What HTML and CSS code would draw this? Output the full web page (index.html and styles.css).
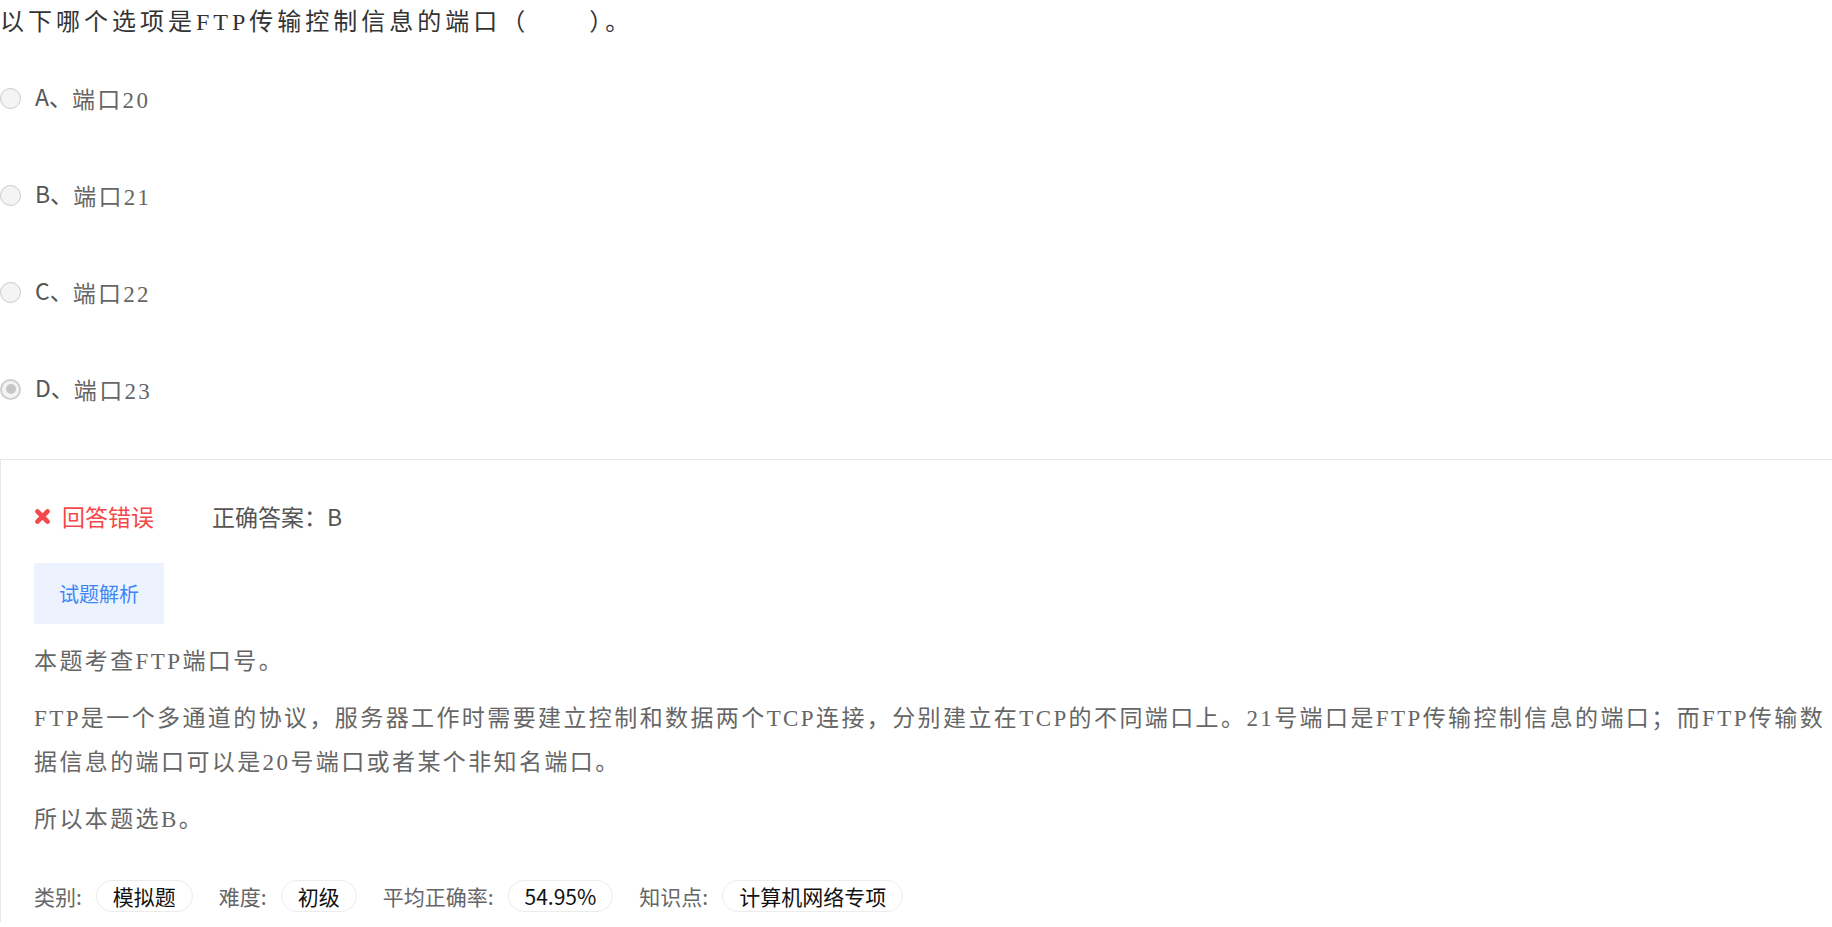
FILE: index.html
```html
<!DOCTYPE html>
<html lang="zh-CN">
<head>
<meta charset="utf-8">
<title>试题</title>
<link rel="stylesheet" href="styles.css">
</head>
<body>
<div class="page">
  <div class="question">以下哪个选项是FTP传输控制信息的端口（&nbsp;&nbsp;&nbsp;&nbsp;&nbsp;&nbsp;）。</div>
  <ul class="options">
    <li class="option"><span class="radio"></span><span class="opt-label"><span class="opt-key">A、</span><span class="opt-text">端口20</span></span></li>
    <li class="option"><span class="radio"></span><span class="opt-label"><span class="opt-key">B、</span><span class="opt-text">端口21</span></span></li>
    <li class="option"><span class="radio"></span><span class="opt-label"><span class="opt-key">C、</span><span class="opt-text">端口22</span></span></li>
    <li class="option"><span class="radio checked"></span><span class="opt-label"><span class="opt-key">D、</span><span class="opt-text">端口23</span></span></li>
  </ul>
  <div class="analysis">
    <div class="result">
      <span class="wrong"><svg class="wrong-icon" viewBox="0 0 16 16" aria-hidden="true"><path d="M3.2 3.2 L12.8 12.8 M12.8 3.2 L3.2 12.8" stroke="#f5484a" stroke-width="4.4" stroke-linecap="round" fill="none"/></svg>回答错误</span>
      <span class="answer">正确答案：B</span>
    </div>
    <div class="tabs"><span class="tab">试题解析</span></div>
    <div class="explain">
      <p>本题考查FTP端口号。</p>
      <p>FTP是一个多通道的协议，服务器工作时需要建立控制和数据两个TCP连接，分别建立在TCP的不同端口上。21号端口是FTP传输控制信息的端口；而FTP传输数据信息的端口可以是20号端口或者某个非知名端口。</p>
      <p>所以本题选B。</p>
    </div>
    <div class="meta">
      <span class="meta-label">类别:</span><span class="pill">模拟题</span>
      <span class="meta-label">难度:</span><span class="pill">初级</span>
      <span class="meta-label">平均正确率:</span><span class="pill">54.95%</span>
      <span class="meta-label">知识点:</span><span class="pill">计算机网络专项</span>
    </div>
  </div>
</div>
</body>
</html>
```

FILE: styles.css
```css
html, body {
  margin: 0;
  padding: 0;
  background: #ffffff;
}

body {
  font-family: "Noto Sans CJK SC", sans-serif;
  color: #333333;
}

.page {
  overflow: hidden;
  height: 927px;
}

.question {
  font-family: "Liberation Serif", "Noto Sans CJK SC", serif;
  font-size: 24px;
  letter-spacing: 4px;
  line-height: 44px;
  color: #333333;
}

.options {
  list-style: none;
  margin: 34px 0 0;
  padding: 0;
}

.option {
  display: flex;
  align-items: center;
  height: 40px;
  margin-bottom: 57px;
}

.option:last-child {
  margin-bottom: 0;
}

.radio {
  flex: none;
  position: relative;
  box-sizing: border-box;
  width: 21px;
  height: 21px;
  border: 1px solid #c9c9c9;
  border-radius: 50%;
  background: #f4f4f4;
  margin-right: 14px;
}

.radio.checked {
  border: 2px solid #cfcfcf;
}

.radio.checked::after {
  content: "";
  position: absolute;
  left: 3.5px;
  top: 3.5px;
  width: 10px;
  height: 10px;
  border-radius: 50%;
  background: #c6c6c6;
}

.opt-label {
  line-height: 40px;
}

.opt-key {
  font-size: 23px;
  color: #555555;
}

.opt-text {
  font-family: "Liberation Serif", "Noto Sans CJK SC", serif;
  font-size: 23px;
  letter-spacing: 2.3px;
  color: #666666;
  vertical-align: -2px;
}

.analysis {
  box-sizing: border-box;
  width: 1880px;
  margin-top: 50px;
  border-top: 1px solid #e6e6e6;
  border-left: 1px solid #e6e6e6;
  padding: 41px 36px 10px 33px;
}

.result {
  display: flex;
  align-items: center;
  height: 30px;
  font-size: 23px;
}

.wrong {
  display: flex;
  align-items: center;
  color: #f5484a;
}

.wrong-icon {
  width: 17px;
  height: 17px;
  margin-right: 11px;
}

.answer {
  color: #555555;
  margin-left: 58px;
}

.tabs {
  display: flex;
  margin-top: 32px;
}

.tab {
  background: #ecf3ff;
  color: #3d86f5;
  font-size: 20px;
  line-height: 61px;
  padding: 0 25px;
}

.explain {
  margin-top: 16px;
  font-family: "Liberation Serif", "Noto Sans CJK SC", serif;
  font-size: 23px;
  letter-spacing: 2.4px;
  line-height: 44px;
  color: #666666;
}

.explain p {
  margin: 0 0 13px;
}

.meta {
  display: flex;
  align-items: center;
  margin-top: 38px;
  font-size: 21px;
}

.meta-label {
  color: #666666;
  margin-right: 14px;
}

.pill {
  box-sizing: border-box;
  height: 32px;
  line-height: 30px;
  border: 1px solid #ececec;
  border-radius: 16px;
  padding: 0 16px;
  color: #111111;
  margin-right: 26px;
}
```
